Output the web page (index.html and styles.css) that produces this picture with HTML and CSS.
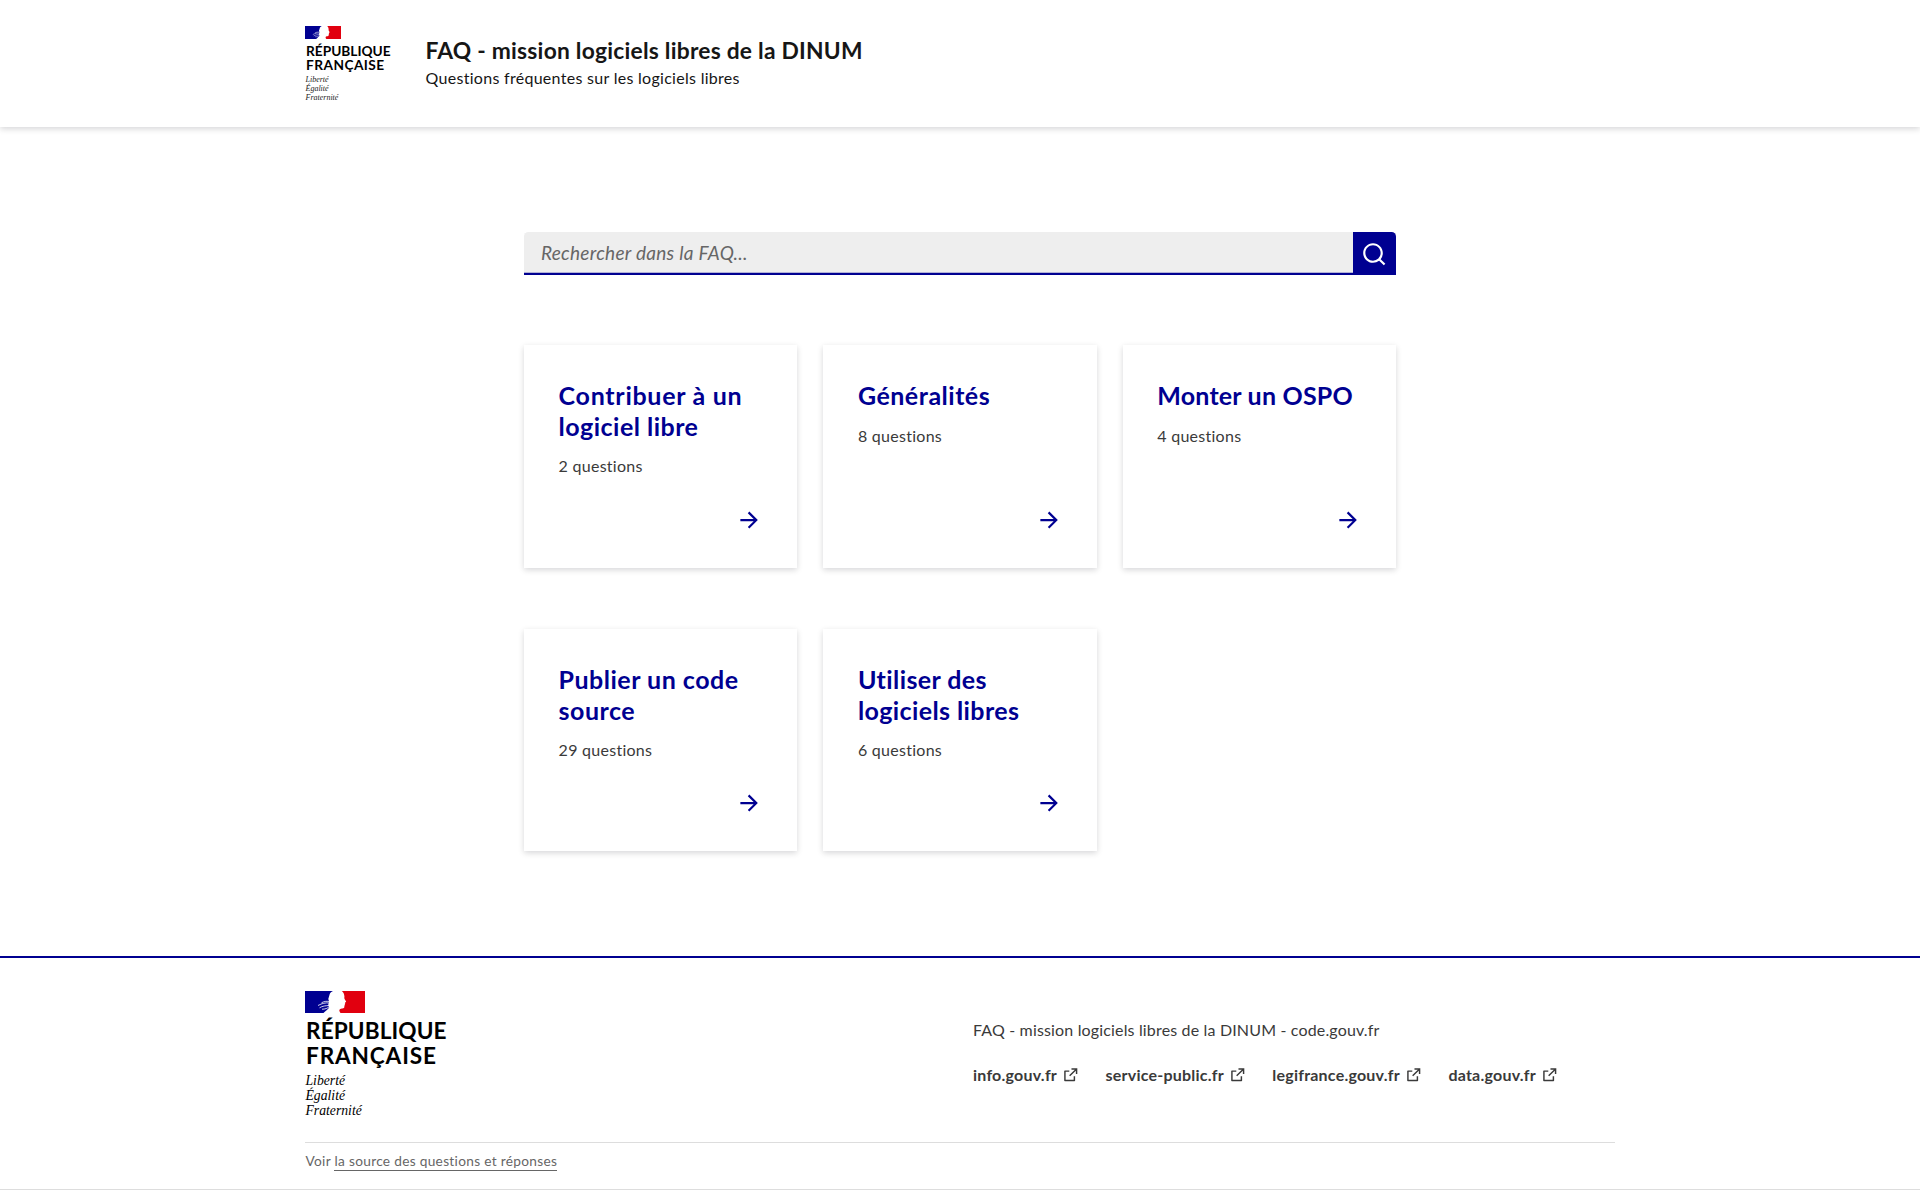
FILE: index.html
```
<!DOCTYPE html>
<html lang="fr">
<head>
<meta charset="utf-8">
<title>FAQ - mission logiciels libres de la DINUM</title>
<link rel="stylesheet" href="styles.css">
</head>
<body>
<svg class="sprite" aria-hidden="true">
  <symbol id="arrow" viewBox="0 0 24 24"><path d="M16.172 11l-5.364-5.364 1.414-1.414L20 12l-7.778 7.778-1.414-1.414L16.172 13H4v-2z"/></symbol>
  <symbol id="external" viewBox="0 0 24 24"><path d="M10 6v2H5v11h11v-5h2v6a1 1 0 0 1-1 1H4a1 1 0 0 1-1-1V7a1 1 0 0 1 1-1h6zm11-3v8h-2V6.413l-7.793 7.794-1.414-1.414L17.585 5H13V3h8z"/></symbol>
  <symbol id="search" viewBox="0 0 24 24"><path d="M18.031 16.617l4.283 4.282-1.415 1.415-4.282-4.283A8.96 8.96 0 0 1 11 20c-4.968 0-9-4.032-9-9s4.032-9 9-9 9 4.032 9 9a8.96 8.96 0 0 1-1.969 5.617zm-2.006-.742A6.977 6.977 0 0 0 18 11c0-3.868-3.133-7-7-7-3.868 0-7 3.132-7 7 0 3.867 3.132 7 7 7a6.977 6.977 0 0 0 4.875-1.975l.15-.15z"/></symbol>
  <symbol id="flag" viewBox="0 0 60 22" preserveAspectRatio="none">
    <path fill="#fff" d="M0 0h60v22H0z"/>
    <path fill="#000091" d="M0 0h28C26 .8 25 2 24.600 3.600L23.300 8l.8 2.500-.9 3.500 1 2.500c-1.500 2.200-3.500 3.300-5.700 5.500H0z"/>
    <path fill="none" stroke="#fff" stroke-width=".8" d="M24 10.500c-2.500-.4-5-.2-7.500 1.300M24 12c-3-.5-7 .3-11 2.500M24 14.500c-3 .2-6.500.4-9.500 2.300M24.500 15.500c-2 1.800-4.500 2.800-7.500 2.700"/>
    <path fill="#e1000f" d="M60 0v22H35.500c-.6-1-1.400-1.700-1.100-2.900.2-1.200 1.300-1.600 2.500-1.700 1.500.1 2.400-.2 2.500-1.300l-.1-1.300.7-.7-.3-1.100.5-.6-.1-.9 1.100-.8c-.6-1.100-1.600-2.300-1.900-3.400.2-1.400.2-2.800-.3-4.100C38.600 1.900 38 .8 36.800 0z"/>
  </symbol>
</svg>

<header class="header">
  <div class="container header__body">
    <div class="logo">
      <svg class="logo__flag"><use href="#flag"/></svg>
      <div class="logo__name">République<br><span class="logo__line">Française</span></div>
      <div class="logo__motto">Liberté<br>Égalité<br>Fraternité</div>
    </div>
    <div class="service">
      <div class="service__title">FAQ - mission logiciels libres de la DINUM</div>
      <div class="service__tagline">Questions fréquentes sur les logiciels libres</div>
    </div>
  </div>
</header>

<main class="main">
  <form class="search">
    <input class="search__input" type="text" placeholder="Rechercher dans la FAQ...">
    <button class="search__button" type="button" aria-label="Rechercher"><svg class="icon"><use href="#search"/></svg></button>
  </form>
  <div class="cards">
    <a class="card">
      <h2 class="card__title card__title--contribute">Contribuer à un<br><span class="card__line">logiciel libre</span></h2>
      <p class="card__detail">2 questions</p>
      <svg class="icon card__arrow"><use href="#arrow"/></svg>
    </a>
    <a class="card">
      <h2 class="card__title">Généralités</h2>
      <p class="card__detail">8 questions</p>
      <svg class="icon card__arrow"><use href="#arrow"/></svg>
    </a>
    <a class="card">
      <h2 class="card__title card__title--ospo">Monter un OSPO</h2>
      <p class="card__detail">4 questions</p>
      <svg class="icon card__arrow"><use href="#arrow"/></svg>
    </a>
    <a class="card">
      <h2 class="card__title">Publier un code<br>source</h2>
      <p class="card__detail">29 questions</p>
      <svg class="icon card__arrow"><use href="#arrow"/></svg>
    </a>
    <a class="card">
      <h2 class="card__title card__title--use">Utiliser des<br>logiciels libres</h2>
      <p class="card__detail">6 questions</p>
      <svg class="icon card__arrow"><use href="#arrow"/></svg>
    </a>
  </div>
</main>

<footer class="footer">
  <div class="container">
    <div class="footer__body">
      <div class="logo logo--large">
        <svg class="logo__flag"><use href="#flag"/></svg>
        <div class="logo__name">République<br><span class="logo__line">Française</span></div>
        <div class="logo__motto">Liberté<br>Égalité<br>Fraternité</div>
      </div>
      <div class="footer__content">
        <p class="footer__desc">FAQ - mission logiciels libres de la DINUM - code.gouv.fr</p>
        <ul class="footer__links">
          <li class="footer__link">info.gouv.fr<svg class="footer__icon"><use href="#external"/></svg></li>
          <li class="footer__link">service-public.fr<svg class="footer__icon"><use href="#external"/></svg></li>
          <li class="footer__link">legifrance.gouv.fr<svg class="footer__icon"><use href="#external"/></svg></li>
          <li class="footer__link">data.gouv.fr<svg class="footer__icon"><use href="#external"/></svg></li>
        </ul>
      </div>
    </div>
    <div class="footer__bottom">Voir <a class="footer__source">la source des questions et réponses</a></div>
  </div>
</footer>
</body>
</html>
```
FILE: styles.css
```
* { box-sizing: border-box; margin: 0; padding: 0; }
body { background: #fff; color: #161616; font-family: Lato, "Liberation Sans", sans-serif; font-size: 16px; line-height: 26px; }
.sprite { display: none; }
.container { width: 1310px; margin: 0 auto; }
.icon { display: block; width: 26.2px; height: 26.2px; fill: currentColor; }

.header { height: 127px; box-shadow: 0 2px 6px rgba(0, 0, 18, .16); }
.header__body { display: flex; }
.logo { width: 120px; padding-top: 26px; color: #000; }
.logo__flag { display: block; width: 36px; height: 13px; }
.logo__name { margin: 4.7px 0 0 1px; font-size: 13.7px; font-weight: 700; line-height: 14px; text-transform: uppercase; }
.logo__line { letter-spacing: .45px; }
.logo__motto { margin: 3px 0 0 .5px; font-family: "Liberation Serif", serif; font-size: 8px; font-style: italic; line-height: 9px; color: #222; }
.service { padding: 34.5px 0 0 .5px; }
.service__title { font-size: 22.8px; font-weight: 700; line-height: 30.5px; letter-spacing: .23px; }
.service__tagline { letter-spacing: .29px; }

.main { width: 872px; height: 829px; margin: 0 auto; padding-top: 105px; }
.search { display: flex; height: 43px; }
.search__input { flex: 1; min-width: 0; padding: 0 17px 2px; border: 0; border-radius: 4.4px 0 0; background: #eee; box-shadow: inset 0 -2.2px #000091; font: italic 19px Lato, "Liberation Sans", sans-serif; letter-spacing: .28px; }
.search__input::placeholder { color: #666; opacity: 1; }
.search__button { display: flex; align-items: center; justify-content: center; width: 43px; padding-top: 1px; border: 0; border-radius: 0 4.4px 0 0; background: #000091; color: #fff; }
.cards { display: grid; grid-template-columns: repeat(3, 1fr); grid-template-rows: 223px 222px; gap: 61px 26px; margin-top: 70px; }
.card { display: flex; flex-direction: column; padding: 35px 28px 34.6px 34.6px; background: #fff; box-shadow: 0 2px 6px rgba(0, 0, 18, .16); }
.card__title { color: #000091; font-size: 25px; font-weight: 700; line-height: 30.5px; letter-spacing: .5px; white-space: nowrap; }
.card__title--contribute { letter-spacing: .72px; }
.card__title--contribute .card__line { letter-spacing: .48px; }
.card__title--ospo { letter-spacing: .2px; }
.card__title--use { letter-spacing: .4px; }
.card__detail { margin-top: 12px; color: #3a3a3a; letter-spacing: .27px; }
.card__arrow { margin: auto 6.8px 0 auto; color: #000091; }

.footer { height: 234px; border-top: 2px solid #000091; border-bottom: 1px solid #ddd; color: #3a3a3a; }
.footer__body { display: flex; height: 184px; padding-top: 33px; }
.logo--large { width: 668px; padding-top: 0; }
.logo--large .logo__flag { width: 60px; height: 22px; }
.logo--large .logo__name { margin: 6.2px 0 0 1px; font-size: 22.6px; line-height: 24.4px; letter-spacing: .1px; }
.logo--large .logo__line { letter-spacing: .85px; }
.logo--large .logo__motto { margin-top: 5px; font-size: 13.7px; line-height: 15px; color: #000; }
.footer__content { padding-top: 26px; }
.footer__desc { letter-spacing: .16px; }
.footer__links { display: flex; gap: 26.2px; margin-top: 19px; list-style: none; }
.footer__link { display: flex; gap: 4.8px; font-weight: 700; letter-spacing: .22px; }
.footer__icon { width: 17.5px; height: 17.5px; margin-top: 4px; fill: currentColor; }
.footer__bottom { padding: 7px 0 0 .5px; border-top: 1px solid #ddd; color: #666; font-size: 13.7px; line-height: 22px; letter-spacing: .3px; }
.footer__source { padding-bottom: 1px; border-bottom: 1px solid #666; }
```
